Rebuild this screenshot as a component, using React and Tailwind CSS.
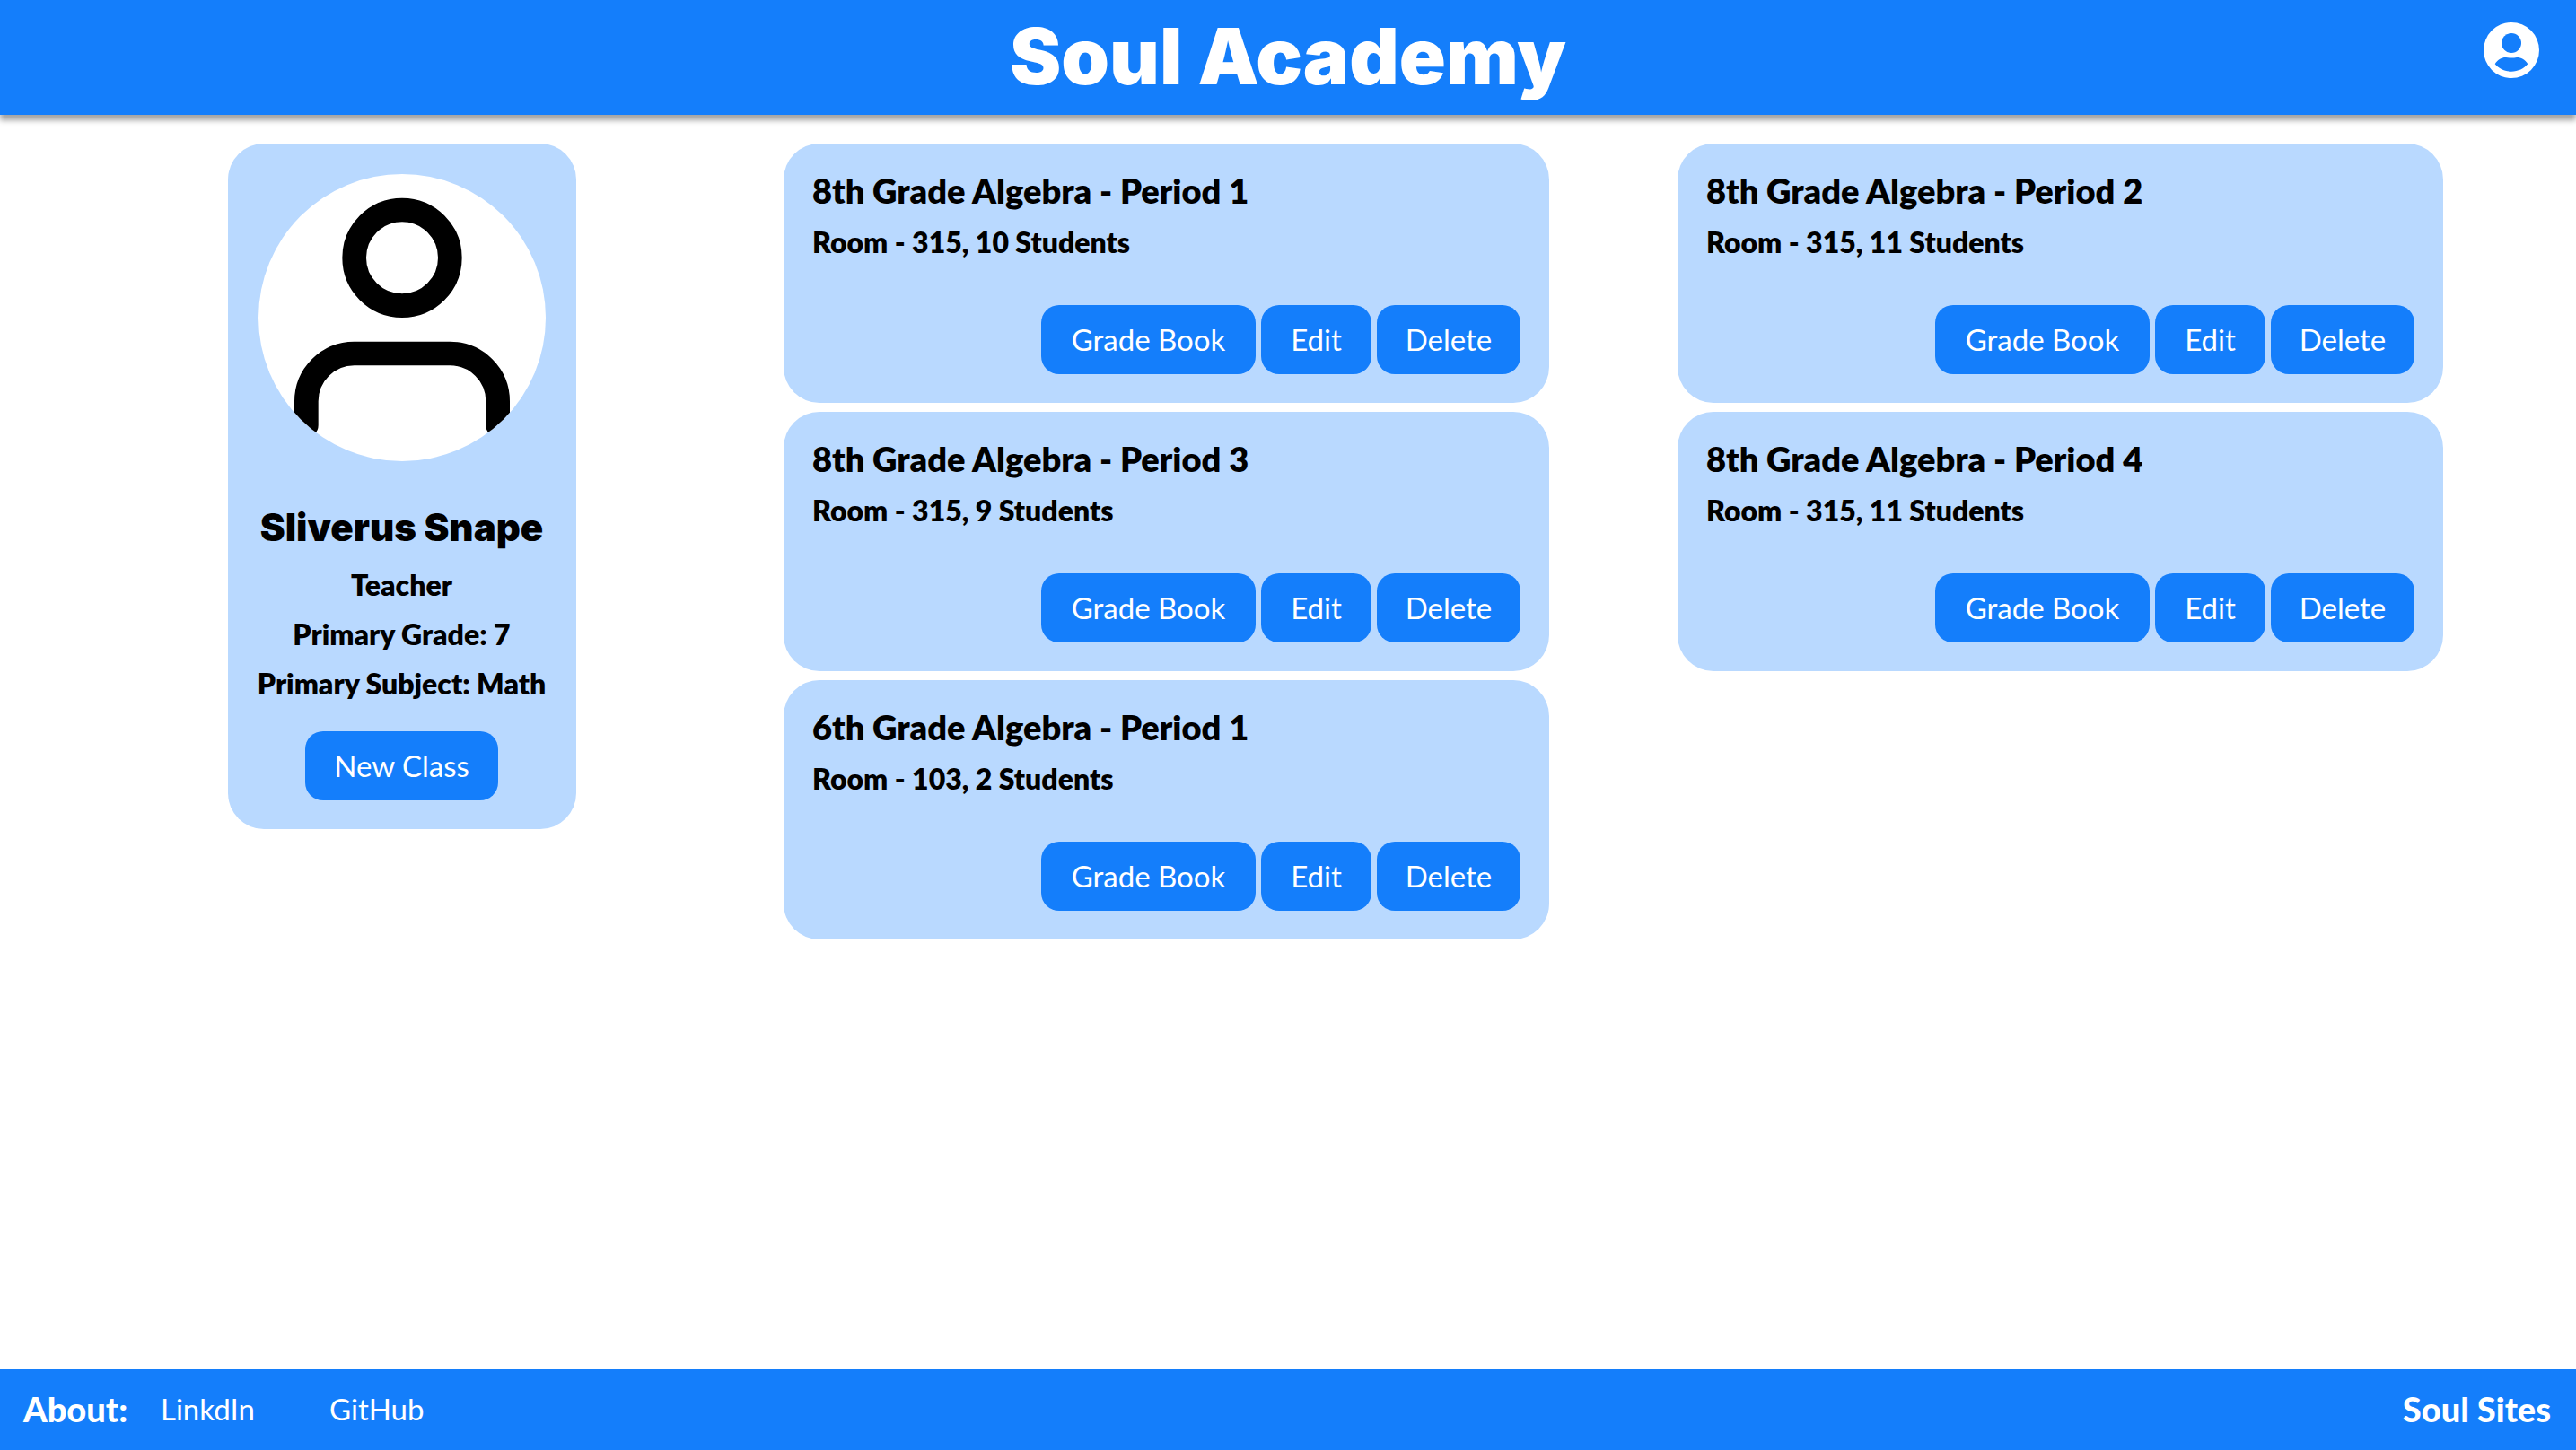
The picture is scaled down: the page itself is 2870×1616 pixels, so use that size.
const classes = [
  { name: "8th Grade Algebra - Period 1", info: "Room - 315, 10 Students" },
  { name: "8th Grade Algebra - Period 2", info: "Room - 315, 11 Students" },
  { name: "8th Grade Algebra - Period 3", info: "Room - 315, 9 Students" },
  { name: "8th Grade Algebra - Period 4", info: "Room - 315, 11 Students" },
  { name: "6th Grade Algebra - Period 1", info: "Room - 103, 2 Students" },
];

function Button({ className, children }) {
  return (
    <button
      type="button"
      className={`h-[77px] rounded-[20px] bg-[#147efb] pb-0.5 text-center text-[33px] leading-[44px] text-white ${className}`}
    >
      {children}
    </button>
  );
}

function AccountIcon() {
  return (
    <svg viewBox="0 0 62 62" className="size-[62px]" aria-hidden="true">
      <circle cx="31" cy="31" r="31" fill="#fff" />
      <circle cx="31" cy="23" r="11" fill="#147efb" />
      <path
        d="M12.7 46.3C16 41 21 38.7 25 39C29 39.7 33 39.7 37 39C41 38.7 46 41 49.3 46.3C45 51.5 38.5 54.7 31 54.7C23.5 54.7 17 51.5 12.7 46.3Z"
        fill="#147efb"
      />
    </svg>
  );
}

function Avatar() {
  return (
    <div className="size-80 overflow-hidden rounded-full bg-white">
      <svg
        viewBox="0 0 24 24"
        className="size-full"
        fill="none"
        stroke="#000"
        strokeWidth="2"
        strokeLinecap="round"
        strokeLinejoin="round"
        aria-hidden="true"
      >
        <path d="M20 21v-2a4 4 0 0 0-4-4H8a4 4 0 0 0-4 4v2" />
        <circle cx="12" cy="7" r="4" />
      </svg>
    </div>
  );
}

function ProfileCard() {
  return (
    <section className="flex w-[388px] flex-col items-center rounded-[40px] bg-[#b9d9ff] pt-[34px] pb-8 whitespace-nowrap">
      <Avatar />
      <h2 className="mt-[46px] font-['Inter',sans-serif] text-[42px] leading-[56px] font-black">Sliverus Snape</h2>
      <p className="mt-2 text-[32px] leading-[55px] font-extrabold">Teacher</p>
      <p className="text-[32px] leading-[55px] font-extrabold">Primary Grade: 7</p>
      <p className="text-[32px] leading-[55px] font-extrabold">Primary Subject: Math</p>
      <Button className="mt-[26px] w-[215px]">New Class</Button>
    </section>
  );
}

function ClassCard({ name, info }) {
  return (
    <article className="rounded-[40px] bg-[#b9d9ff] px-8 pt-[30px] pb-8">
      <h3 className="text-[38px] leading-[44px] font-extrabold">{name}</h3>
      <p className="mt-3 text-[32px] leading-[48px] font-extrabold">{info}</p>
      <div className="mt-[46px] flex justify-end gap-1.5">
        <Button className="w-[239px]">Grade Book</Button>
        <Button className="w-[123px]">Edit</Button>
        <Button className="w-40">Delete</Button>
      </div>
    </article>
  );
}

export default function App() {
  return (
    <div className="flex min-h-screen flex-col bg-white font-['Lato',sans-serif] text-black">
      <header className="grid h-32 grid-cols-[1fr_auto_1fr] bg-[#147efb] text-white shadow-[0_6px_6px_rgba(0,0,0,0.36)]">
        <h1 className="col-start-2 font-['Inter',sans-serif] text-[86px] leading-[126px] font-black">Soul Academy</h1>
        <button type="button" aria-label="Account" className="mt-[25px] mr-[41px] self-start justify-self-end">
          <AccountIcon />
        </button>
      </header>
      <main className="grid grow grid-cols-[873fr_1997fr] items-start pt-8">
        <div className="flex justify-center pl-[22px]">
          <ProfileCard />
        </div>
        <div className="grid grid-cols-2 gap-x-[143px] gap-y-2.5 pr-[148px]">
          {classes.map((item) => (
            <ClassCard key={item.name} {...item} />
          ))}
        </div>
      </main>
      <footer className="flex h-[90px] items-center bg-[#147efb] pr-7 pb-0.5 pl-[26px] text-white">
        <h4 className="w-[153px] text-[38px] leading-[44px] font-black">About:</h4>
        <a href="#linkedin" className="w-[188px] text-[33px] leading-[44px]">LinkdIn</a>
        <a href="#github" className="text-[33px] leading-[44px]">GitHub</a>
        <h4 className="ml-auto text-[38px] leading-[44px] font-black">Soul Sites</h4>
      </footer>
    </div>
  );
}
